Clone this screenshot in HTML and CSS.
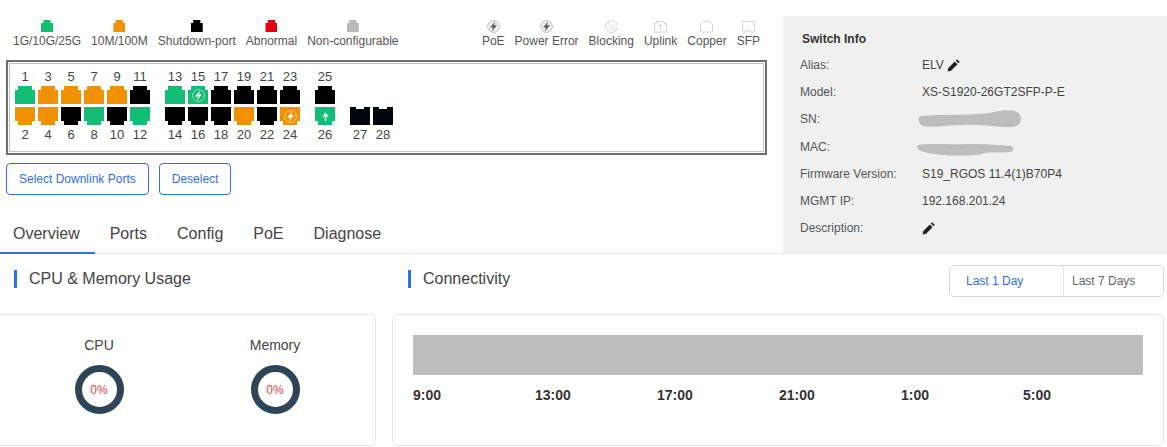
FILE: index.html
```html
<!DOCTYPE html>
<html lang="en">
<head>
<meta charset="utf-8">
<title>Switch</title>
<link rel="stylesheet" href="styles.css">
</head>
<body>
<svg class="defs" width="0" height="0" aria-hidden="true">
  <defs>
    <symbol id="pencil" viewBox="0 0 14 14"><path d="M.6 13.4l.8-3.8 7-7 3 3-7 7zM9.4 1.6l.9-.9c.3-.3.8-.3 1.1 0l1.9 1.9c.3.3.3.8 0 1.1l-.9.9z" fill="#222"/></symbol>
    <symbol id="bolt" viewBox="0 0 14 14"><path d="M8.6 1.6L3.4 8.1h3L5.3 12.4l5.4-6.7H7.6z"/></symbol>
  </defs>
</svg>
<div class="top">
  <div class="left">
    <div class="legends">
      <div class="legend-group">
        <div class="legend"><i class="swatch green"></i><span>1G/10G/25G</span></div>
        <div class="legend"><i class="swatch orange"></i><span>10M/100M</span></div>
        <div class="legend"><i class="swatch black"></i><span>Shutdown-port</span></div>
        <div class="legend"><i class="swatch red"></i><span>Abnormal</span></div>
        <div class="legend"><i class="swatch gray"></i><span>Non-configurable</span></div>
      </div>
      <div class="legend-group">
        <div class="legend"><svg class="glyph" viewBox="0 0 14 14"><circle cx="7" cy="7" r="6.4" fill="#eee" stroke="#b4b4b4" stroke-width=".9"/><use href="#bolt" fill="#5c5c5c"/></svg><span>PoE</span></div>
        <div class="legend"><svg class="glyph" viewBox="0 0 14 14"><circle cx="7" cy="7" r="6.4" fill="#eee" stroke="#b4b4b4" stroke-width=".9"/><use href="#bolt" fill="#5c5c5c"/></svg><span>Power Error</span></div>
        <div class="legend"><svg class="glyph" viewBox="0 0 14 14"><circle cx="7" cy="7" r="6.4" fill="none" stroke="#d0d0d0"/><path d="M2.6 2.6l8.8 8.8" stroke="#d0d0d0"/></svg><span>Blocking</span></div>
        <div class="legend"><svg class="glyph" viewBox="0 0 14 14"><path d="M3 1.5h8v2h2.5v9.500H.5v-9.500H3z" fill="none" stroke="#cfcfcf"/><path d="M7 10.500V5M5.500 6.500L7 5l1.500 1.500" fill="none" stroke="#cfcfcf"/></svg><span>Uplink</span></div>
        <div class="legend"><svg class="glyph" viewBox="0 0 14 14"><path d="M3.500 1.500h7l3 3v8.500H.5V4.500z" fill="none" stroke="#cfcfcf"/></svg><span>Copper</span></div>
        <div class="legend"><svg class="glyph" viewBox="0 0 14 14"><path d="M.5 1.500h13v11.500h-4l-1-1.500h-3l-1 1.500h-4z" fill="none" stroke="#cfcfcf"/></svg><span>SFP</span></div>
      </div>
    </div>

    <div class="board"><div class="board-inner">
      <div class="group">
        <div class="col"><b>1</b><i class="port up green"></i><i class="port down orange"></i><b>2</b></div>
        <div class="col"><b>3</b><i class="port up orange"></i><i class="port down orange"></i><b>4</b></div>
        <div class="col"><b>5</b><i class="port up orange"></i><i class="port down black"></i><b>6</b></div>
        <div class="col"><b>7</b><i class="port up orange"></i><i class="port down green"></i><b>8</b></div>
        <div class="col"><b>9</b><i class="port up orange"></i><i class="port down black"></i><b>10</b></div>
        <div class="col"><b>11</b><i class="port up black"></i><i class="port down green"></i><b>12</b></div>
      </div>
      <div class="group">
        <div class="col"><b>13</b><i class="port up green"></i><i class="port down black"></i><b>14</b></div>
        <div class="col"><b>15</b><i class="port up green"><svg class="badge" viewBox="0 0 14 14"><circle cx="7" cy="7" r="6.400" fill="none" stroke="#bfeedb" stroke-width=".8"/><use href="#bolt" fill="#fff"/></svg></i><i class="port down black"></i><b>16</b></div>
        <div class="col"><b>17</b><i class="port up black"></i><i class="port down black"></i><b>18</b></div>
        <div class="col"><b>19</b><i class="port up black"></i><i class="port down orange"></i><b>20</b></div>
        <div class="col"><b>21</b><i class="port up black"></i><i class="port down black"></i><b>22</b></div>
        <div class="col"><b>23</b><i class="port up black"></i><i class="port down orange"><svg class="badge" viewBox="0 0 14 14"><circle cx="7" cy="7" r="6.400" fill="none" stroke="#fbdcae" stroke-width=".8"/><use href="#bolt" fill="#fff"/></svg></i><b>24</b></div>
      </div>
      <div class="group">
        <div class="col"><b>25</b><i class="port up black"></i><i class="port down green"><svg class="badge" viewBox="0 0 14 14"><path d="M7 12V5M4.200 7.500L7 4l2.800 3.500" fill="none" stroke="#d9f5e8" stroke-width="1.500"/></svg></i><b>26</b></div>
      </div>
      <div class="group">
        <div class="col"><b></b><i class="port-blank"></i><i class="port sfp"></i><b>27</b></div>
        <div class="col"><b></b><i class="port-blank"></i><i class="port sfp"></i><b>28</b></div>
      </div>
    </div></div>

    <div class="actions">
      <button class="btn" type="button">Select Downlink Ports</button>
      <button class="btn" type="button">Deselect</button>
    </div>

    <nav class="tabs">
      <a class="tab active">Overview</a>
      <a class="tab">Ports</a>
      <a class="tab">Config</a>
      <a class="tab">PoE</a>
      <a class="tab">Diagnose</a>
    </nav>
  </div>

  <aside class="info">
    <h3>Switch Info</h3>
    <dl>
      <div class="row"><dt>Alias:</dt><dd>ELV <svg class="pencil" aria-hidden="true"><use href="#pencil"/></svg></dd></div>
      <div class="row"><dt>Model:</dt><dd>XS-S1920-26GT2SFP-P-E</dd></div>
      <div class="row"><dt>SN:</dt><dd class="hidden-val"><svg class="smudge sn" viewBox="0 0 104 18"><path d="M2 6C24 4 58 6 76 2c12-3 24-2 26 3 2 6 1 10-7 12-14 1-28-3-50-2-14 0-30 3-40 1C1 15-1 8 2 6z" fill="#bdbdbd"/></svg></dd></div>
      <div class="row"><dt>MAC:</dt><dd class="hidden-val"><svg class="smudge mac" viewBox="0 0 96 13"><path d="M1 2c12-2 30 0 50-1 14 0 36 1 43 2 3 1 3 5 0 6-9 1-20 0-27 1-1 3-34 3-42 2C15 11 3 9 1 6c-1-1-1-3 0-4z" fill="#bdbdbd"/></svg></dd></div>
      <div class="row"><dt>Firmware Version:</dt><dd>S19_RGOS 11.4(1)B70P4</dd></div>
      <div class="row"><dt>MGMT IP:</dt><dd>192.168.201.24</dd></div>
      <div class="row"><dt>Description:</dt><dd><svg class="pencil" aria-hidden="true"><use href="#pencil"/></svg></dd></div>
    </dl>
  </aside>
</div>

<div class="bottom">
  <section class="usage">
    <div class="head"><h2 class="title">CPU &amp; Memory Usage</h2></div>
    <div class="card gauges">
      <div class="gauge"><p>CPU</p><div class="ring"><span>0%</span></div></div>
      <div class="gauge"><p>Memory</p><div class="ring"><span>0%</span></div></div>
    </div>
  </section>
  <section class="conn">
    <div class="head">
      <h2 class="title">Connectivity</h2>
      <div class="seg"><span class="seg-item on">Last 1 Day</span><span class="seg-item">Last 7 Days</span></div>
    </div>
    <div class="card timeline">
      <div class="bar"></div>
      <div class="ticks"><span>9:00</span><span>13:00</span><span>17:00</span><span>21:00</span><span>1:00</span><span>5:00</span></div>
    </div>
  </section>
</div>
</body>
</html>
```
FILE: styles.css
```css
* { box-sizing: border-box; }
html, body { margin: 0; padding: 0; }
body {
  width: 1167px;
  height: 447px;
  overflow: hidden;
  background: #fff;
  color: #555;
  font-family: "Liberation Sans", Arial, sans-serif;
  font-size: 12px;
}
.defs { position: absolute; }

.top { display: flex; height: 254px; border-bottom: 1px solid #e8e8e8; }
.left { width: 783px; display: flex; flex-direction: column; }

.legends { display: flex; justify-content: space-between; padding: 20px 23px 0 13px; }
.legend-group { display: flex; gap: 10px; }
.legend { display: flex; flex-direction: column; align-items: center; gap: 2px; line-height: 14px; white-space: nowrap; color: #555; }
.swatch {
  display: block; width: 12px; height: 12px;
  clip-path: polygon(20% 0, 80% 0, 80% 25%, 100% 25%, 100% 100%, 0 100%, 0 25%, 20% 25%);
}
.glyph { display: block; width: 13px; height: 13px; margin-bottom: -1px; }

.green { background: #14bd75; }
.orange { background: #f29100; }
.black { background: #000; }
.red { background: #e60012; }
.gray { background: #b8b8b8; }

.board { margin: 12px 16px 0 6px; border: 2px solid #6e6e6e; padding: 1px; height: 95px; }
.board-inner { border: 1px solid #c4c4c4; height: 100%; padding: 5px 0 0 5px; display: flex; gap: 15px; }
.group { display: flex; gap: 3px; }
.col { width: 20px; display: flex; flex-direction: column; align-items: center; }
.col b { font-weight: 400; font-size: 13px; line-height: 16px; height: 16px; color: #444; white-space: nowrap; }
.col b:first-child { margin-bottom: 1px; }
.col b:last-child { margin-top: 2px; }
.port { display: flex; align-items: center; justify-content: center; width: 20px; height: 18px; }
.port.up { clip-path: polygon(15% 0, 85% 0, 85% 22%, 100% 22%, 100% 100%, 0 100%, 0 22%, 15% 22%); margin-bottom: 3px; }
.port.down { clip-path: polygon(0 0, 100% 0, 100% 78%, 85% 78%, 85% 100%, 15% 100%, 15% 78%, 0 78%); }
.port.sfp { background: #01060c; clip-path: polygon(0 0, 30% 0, 30% 11%, 70% 11%, 70% 0, 100% 0, 100% 100%, 0 100%); }
.port-blank { display: block; height: 21px; }
.badge { width: 13px; height: 13px; display: block; }

.actions { display: flex; gap: 10px; margin: 8px 0 0 6px; }
.btn {
  height: 32px; padding: 0 12px; background: #fff;
  border: 1px solid #2f6fef; border-radius: 4px;
  color: #2f6fef; font: 12px "Liberation Sans", Arial, sans-serif;
}

.tabs { display: flex; margin-top: auto; margin-bottom: -1px; position: relative; }
.tab { height: 40px; padding: 11px 15px 0; font-size: 16px; line-height: 18px; color: #444; }
.tab:first-child { padding-left: 13px; }
.tab.active { border-bottom: 2px solid #2f6fef; }

.info { width: 384px; margin-top: 16px; background: #f0f0f0; padding: 16px 0 0 17px; }
.info h3 { margin: 0 0 5.5px 2px; font-size: 12px; line-height: 14px; font-weight: 700; color: #333; }
.info dl { margin: 0; }
.row { display: flex; height: 27.2px; align-items: center; }
.row dt { width: 122px; color: #555; }
.row dd { margin: 0; color: #444; display: flex; align-items: center; gap: 3px; position: relative; }
.pencil { width: 13px; height: 13px; display: block; }
.hidden-val { height: 14px; }
.smudge { position: absolute; display: block; }
.smudge.sn { left: -4px; top: -2px; width: 104px; height: 18px; }
.smudge.mac { left: -5px; top: 3px; width: 96px; height: 13px; }

.bottom { display: grid; grid-template-columns: 376px 772px; column-gap: 16px; }
.head { display: flex; justify-content: space-between; height: 60px; }
.usage .head { padding-left: 14px; }
.conn .head { padding-left: 16px; }
.title {
  margin: 16px 0 0; height: 18px; padding-left: 12px;
  border-left: 3px solid #2f6fef;
  font-size: 16px; line-height: 18px; font-weight: 400; color: #444; white-space: nowrap;
}
.seg { display: flex; width: 215px; height: 32px; margin-top: 11px; border: 1px solid #d9d9d9; border-radius: 5px; }
.seg-item { line-height: 30px; color: #666; padding-left: 8px; flex: 1; }
.seg-item.on { flex: 0 0 114px; padding-left: 16px; color: #2f6fef; border-right: 1px solid #e4e4e4; }

.card { height: 132px; border: 1px solid #e6e6e6; border-radius: 6px; }
.gauges { display: flex; border-left: 0; border-top-left-radius: 0; border-bottom-left-radius: 0; padding: 22px 12px 0 11px; }
.gauge { flex: 1; display: flex; flex-direction: column; align-items: center; }
.gauge p { margin: 0 0 12px; font-size: 14px; line-height: 16px; color: #444; }
.ring {
  width: 49px; height: 49px; border-radius: 50%;
  border: 7.5px solid #2e4557;
  display: flex; align-items: center; justify-content: center;
  color: #d9423f;
}
.timeline { padding: 20px 20px 0; }
.bar { height: 40px; background: #bdbdbd; }
.ticks { display: grid; grid-template-columns: repeat(6, 122px); margin-top: 12px; font-weight: 700; font-size: 14px; line-height: 16px; color: #333; }
```
